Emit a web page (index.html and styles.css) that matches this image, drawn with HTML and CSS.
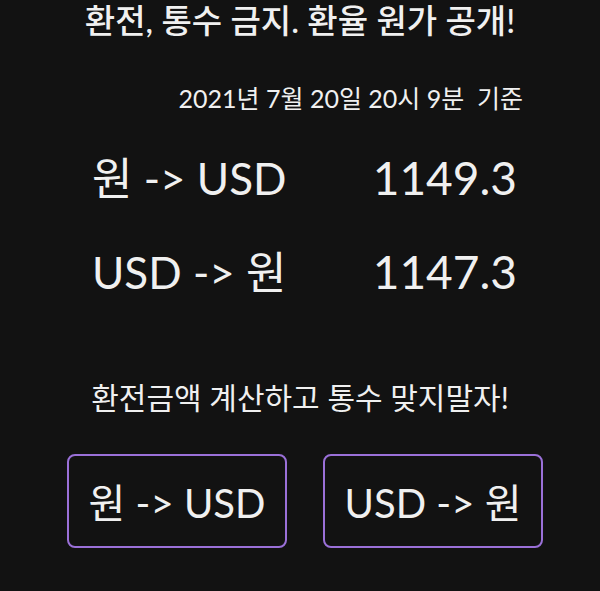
FILE: index.html
```html
<!DOCTYPE html>
<html lang="ko">
<head>
<meta charset="utf-8">
<link rel="stylesheet" href="styles.css">
</head>
<body>
<main class="page">
  <h1 class="title">환전, 통수 금지. 환율 원가 공개!</h1>
  <p class="date">2021년 7월 20일 20시 9분 &nbsp;기준</p>
  <section class="rates">
    <div class="rate-row"><span class="label">원 -&gt; USD</span><span class="value">1149.3</span></div>
    <div class="rate-row"><span class="label">USD -&gt; 원</span><span class="value">1147.3</span></div>
  </section>
  <p class="slogan">환전금액 계산하고 통수 맞지말자!</p>
  <div class="buttons">
    <button class="btn">원 -&gt; USD</button>
    <button class="btn">USD -&gt; 원</button>
  </div>
</main>
</body>
</html>
```

FILE: styles.css
```css
html, body {
  margin: 0;
  padding: 0;
  background: #121212;
}
body {
  font-family: Lato, "Noto Sans CJK KR", sans-serif;
  color: #f0f0f0;
}
.page {
  width: 600px;
  height: 591px;
  overflow: hidden;
  display: flex;
  flex-direction: column;
}
.title {
  margin: 0;
  padding-top: 2px;
  font-size: 33px;
  font-weight: 500;
  line-height: 36px;
  text-align: center;
}
.date {
  margin: 45px 0 0;
  padding-right: 77px;
  font-size: 25px;
  line-height: 30px;
  text-align: right;
}
.rates {
  margin-top: 38px;
  padding: 0 83px 0 92px;
  display: flex;
  flex-direction: column;
  gap: 40px;
}
.rate-row {
  display: flex;
  justify-content: space-between;
  align-items: baseline;
  font-size: 44px;
  line-height: 54px;
}
.value {
  font-size: 46px;
}
.slogan {
  margin: 80px 0 0;
  font-size: 30px;
  line-height: 36px;
  text-align: center;
}
.buttons {
  margin-top: 39px;
  padding-left: 67px;
  display: flex;
  gap: 36px;
}
.btn {
  width: 220px;
  height: 94px;
  background: #121212;
  color: #f0f0f0;
  border: 2px solid #9a70d8;
  border-radius: 8px;
  font-family: Lato, "Noto Sans CJK KR", sans-serif;
  font-size: 40px;
  padding: 0;
}
```
